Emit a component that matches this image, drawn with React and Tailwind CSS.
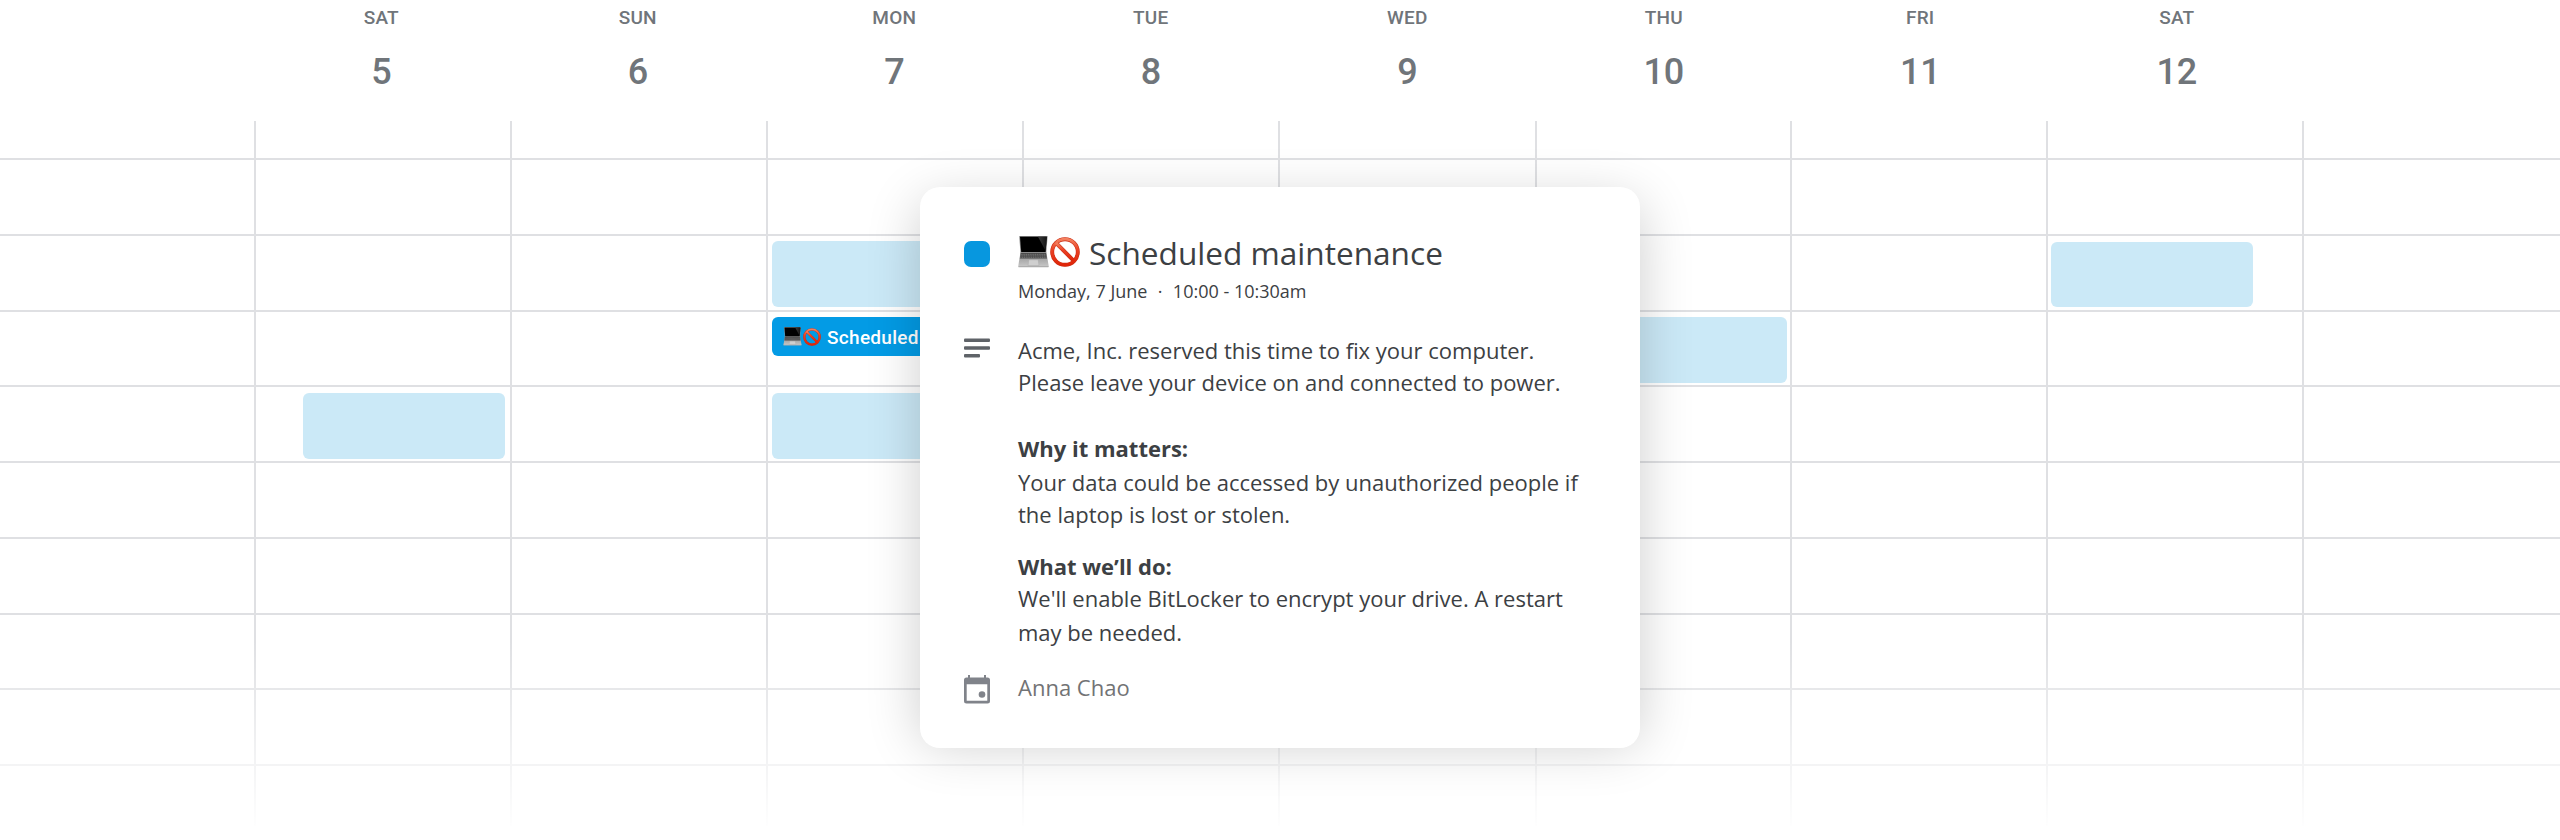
const DAYS = [
  ["SAT", "5"], ["SUN", "6"], ["MON", "7"], ["TUE", "8"],
  ["WED", "9"], ["THU", "10"], ["FRI", "11"], ["SAT", "12"],
];

// Column widths: the outer gutters and the eight days, each closed by a rule.
const COLS = [
  "w-[256px]", "w-[256px]", "w-[256px]", "w-[256px]", "w-[256px]",
  "w-[257px]", "w-[255px]", "w-[256px]", "w-[256px]", "w-[256px]",
];

const ROWS = [
  "h-[39px]", "h-[76px]", "h-[76px]", "h-[75px]", "h-[76px]",
  "h-[76px]", "h-[76px]", "h-[75px]", "h-[76px]", "h-[60px]",
];

const BLOCK = "rounded-[6px] bg-[#cbe9f7]";

function Laptop({ className }) {
  return (
    <svg viewBox="0 0 31 32" className={className} aria-hidden="true">
      <defs>
        <linearGradient id="deck" x1="0" y1="0" x2="0" y2="1">
          <stop offset="0" stopColor="#8a8a8a" />
          <stop offset="1" stopColor="#c6c6c6" />
        </linearGradient>
        <linearGradient id="glass" x1="0" y1="0" x2="1" y2="0">
          <stop offset="0" stopColor="#3c3c3c" />
          <stop offset="1" stopColor="#141414" />
        </linearGradient>
      </defs>
      <path d="M1.200 .6Q1.200 0 1.800 0H29Q29.600 0 29.600 .6L28.300 17H2.500Z" fill="#8f8f8f" />
      <path d="M2 .7H28.800L27.600 16H3.200Z" fill="#000" />
      <path d="M20 .7H28.800L27.700 15Z" fill="url(#glass)" />
      <path d="M2.500 16.400H28.300L30.800 30.200H.2Z" fill="url(#deck)" />
      <path d="M2.700 17H28.100L29 22.600H1.800Z" fill="#4a4a4a" />
      <path d="M2.600 18.400H28.200M2.400 19.900H28.500M2.200 21.400H28.700" stroke="#9a9a9a" strokeWidth=".5" strokeDasharray="1.200 .6" />
      <path d="M10.800 23.800H20.200L21 29.600H10Z" fill="#cfcfcf" stroke="#a2a2a2" strokeWidth=".4" />
      <path d="M.2 30H30.800L30.400 31.300H.6Z" fill="#adadad" />
    </svg>
  );
}

function Prohibited({ className }) {
  return (
    <svg viewBox="0 0 30 30" className={className} aria-hidden="true">
      <defs>
        <linearGradient id="ring" x1="0" y1="0" x2="0" y2="1">
          <stop offset="0" stopColor="#f3805f" />
          <stop offset=".4" stopColor="#ea4326" />
          <stop offset="1" stopColor="#e02508" />
        </linearGradient>
      </defs>
      <g fill="none" stroke="#cc2a10" strokeWidth="3.900">
        <circle cx="15" cy="15" r="12.800" />
        <path d="M6.200 6.200L23.800 23.800" />
      </g>
      <g fill="none" stroke="url(#ring)" strokeWidth="2.800">
        <circle cx="15" cy="15" r="12.800" />
        <path d="M6 6L24 24" />
      </g>
    </svg>
  );
}

function Cell({ col, row }) {
  const key = col + ":" + row;
  if (key === "1:4") return <div className={"ml-[47px] mt-[6px] h-[66px] w-[202px] " + BLOCK} />;
  if (key === "3:2") return <div className={"ml-[4px] mt-[5px] h-[66px] w-[202px] " + BLOCK} />;
  if (key === "3:4") return <div className={"ml-[4px] mt-[6px] h-[66px] w-[202px] " + BLOCK} />;
  if (key === "6:3") return <div className={"ml-[48px] mt-[5px] h-[66px] w-[202px] " + BLOCK} />;
  if (key === "8:2") return <div className={"ml-[3px] mt-[6px] h-[65px] w-[202px] " + BLOCK} />;
  if (key === "3:3")
    return (
      <div className="ml-[4px] mt-[5px] flex h-[39px] w-[202px] items-center whitespace-nowrap rounded-[6px] bg-[#039be5] pl-[11px] text-[19px] font-medium text-white">
        <Laptop className="h-[19px] w-[19px] shrink-0" />
        <Prohibited className="ml-[1px] h-[18px] w-[18px] shrink-0" />
        <span className="ml-[6px] mt-[3px] tracking-[0.300px]">Scheduled</span>
      </div>
    );
  return null;
}

export default function App() {
  return (
    <div className="relative h-[840px] w-[2560px] overflow-hidden bg-white font-['Roboto',sans-serif]">
      <header className="flex h-[121px] pl-[253px] text-[#70757a]">
        {DAYS.map(([name, date]) => (
          <div key={name + date} className="flex w-[256.500px] flex-col items-center font-medium">
            <span className="mt-[6px] text-[19px] leading-[24px] tracking-[0.200px]">{name}</span>
            <span className="mt-[18px] text-[36px] leading-[48px] tracking-[-0.300px]">{date}</span>
          </div>
        ))}
      </header>

      <main className="flex">
        {COLS.map((w, col) => (
          <div key={col} className={"flex shrink-0 flex-col " + w + (col < 9 ? " border-r-2 border-[#dfe0e3]" : "")}>
            {ROWS.map((h, row) => (
              <div
                key={row}
                className={"flex shrink-0 items-start " + h + (row < 9 ? " border-b-2 border-[#dfe0e3]" : "")}
              >
                <Cell col={col} row={row} />
              </div>
            ))}
          </div>
        ))}
      </main>

      <div className="absolute inset-x-0 bottom-0 h-[200px] bg-gradient-to-b from-white/0 to-white to-[96%]" />
      <div className="absolute left-[920px] top-[201px] h-[543px] w-[720px] rounded-[20px] shadow-[0_0_54px_rgba(0,0,0,0.2)]" />

      <section className="absolute left-[920px] top-[187px] flex h-[561px] w-[720px] flex-col rounded-[20px] bg-white pl-[44px] font-['Open_Sans',sans-serif] text-[22px] text-[#3c4043]">
        <div className="mt-[42px] flex">
          <div className="mt-[12px] size-[26px] rounded-[7px] bg-[#0797df]" />
          <div className="ml-[28px]">
            <h1 className="flex h-[48px] items-center text-[31.600px] leading-[48px]">
              <Laptop className="-mt-[2px] h-[32px] w-[31px]" />
              <Prohibited className="-mt-[3px] ml-[1px] h-[30px] w-[30px]" />
              <span className="ml-[9px]">Scheduled maintenance</span>
            </h1>
            <p className="mt-[2px] whitespace-pre text-[18px] leading-[24px]">
              Monday, 7 June<span className="mx-[1px]">{"  ·  "}</span>10:00 - 10:30am
            </p>
          </div>
        </div>
        <div className="mt-[31px] flex leading-[32px]">
          <svg viewBox="0 0 26 20" className="mt-[4px] h-[20px] w-[26px] fill-[#5f6368]">
            <rect y=".5" width="26" height="3.500" rx="1" />
            <rect y="8.300" width="26" height="3.500" rx="1" />
            <rect y="16.100" width="16" height="3.500" rx="1" />
          </svg>
          <div className="ml-[28px]">
            <p>Acme, Inc. reserved this time to fix your computer.<br />Please leave your device on and connected to power.</p>
            <h2 className="mt-[34px] font-bold">Why it matters:</h2>
            <p className="mt-[2px]">Your data could be accessed by unauthorized people if<br />the laptop is lost or stolen.</p>
            <h2 className="mt-[20px] font-bold">What we’ll do:</h2>
            <p className="leading-[33.500px]">We'll enable BitLocker to encrypt your drive. A restart<br />may be needed.</p>
          </div>
        </div>
        <div className="mt-[22px] flex leading-[32px] text-[#727375]">
          <svg viewBox="0 0 26 29" className="mt-[4px] h-[29px] w-[26px] fill-[#80838a]">
            <path fillRule="evenodd" d="M4 0H6V2.500H20V0H22V2.500H23.500Q26 2.500 26 5V26Q26 28.500 23.500 28.500H2.500Q0 28.500 0 26V5Q0 2.500 2.500 2.500H4ZM2.700 9.200V25.800H23.300V9.200Z" />
            <circle cx="18" cy="19.500" r="3.300" />
          </svg>
          <span className="ml-[28px]">Anna Chao</span>
        </div>
      </section>
    </div>
  );
}
